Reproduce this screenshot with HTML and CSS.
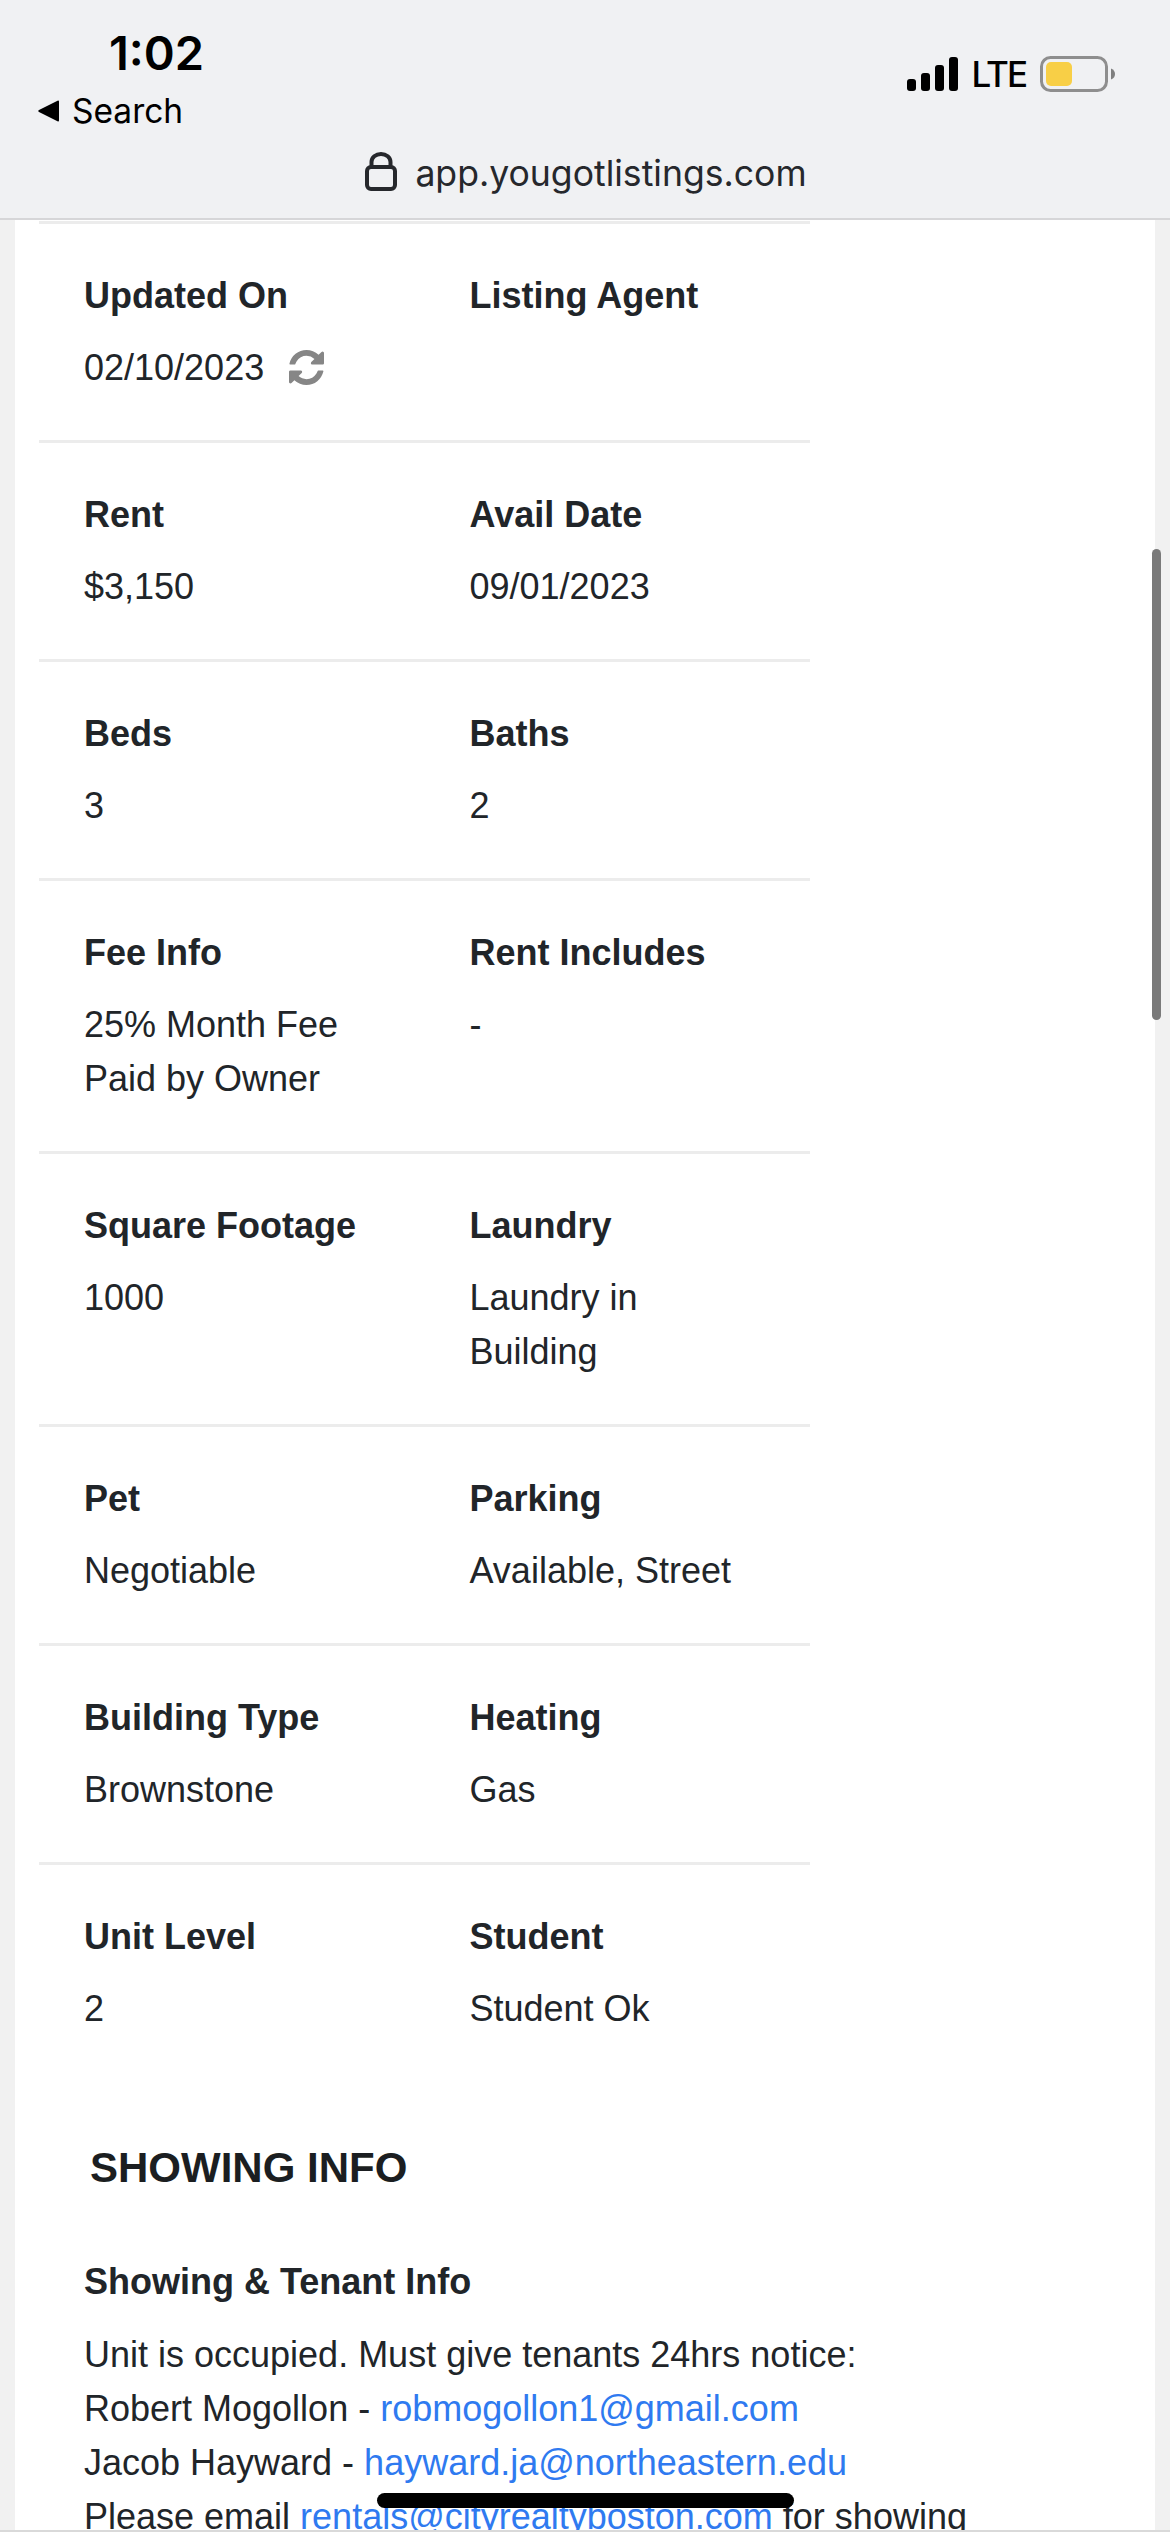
FILE: index.html
```html
<!DOCTYPE html>
<html lang="en">
<head>
  <meta charset="UTF-8">
  <meta name="viewport" content="width=device-width, initial-scale=1.0">
  <title>Listing Details</title>
  <link rel="stylesheet" href="styles.css">
</head>
<body>
  <header class="browser-bar">
    <div class="status-row">
      <div class="status-left">
        <div class="clock">1:02</div>
        <div class="back-link">
          <svg class="back-arrow" viewBox="0 0 22 22"><path d="M21 1.500v19a1 1 0 0 1-1.500.8L1 12a1.200 1.200 0 0 1 0-2L19.500.7A1 1 0 0 1 21 1.500z"/></svg>
          <span>Search</span>
        </div>
      </div>
      <div class="status-right">
        <svg class="signal" viewBox="0 0 51 34">
          <rect x="0" y="22" width="9" height="12" rx="3"/>
          <rect x="14" y="16" width="9" height="18" rx="3"/>
          <rect x="28" y="8" width="9" height="26" rx="3"/>
          <rect x="42" y="0" width="9" height="34" rx="3"/>
        </svg>
        <span class="lte">LTE</span>
        <svg class="battery" viewBox="0 0 75 36">
          <rect x="1.500" y="1.500" width="65" height="33" rx="9" fill="none" stroke="#8e8e8e" stroke-width="3"/>
          <rect x="6" y="6" width="26" height="24" rx="5" fill="#f8cf46"/>
          <path d="M71 12.500c3 1 4 3.500 4 5.500s-1 4.500-4 5.500z" fill="#7f7f7f"/>
        </svg>
      </div>
    </div>
    <div class="url-row">
      <svg class="lock" viewBox="0 0 32 39"><path d="M6.500 15V10a9.500 8 0 0 1 19 0v5" fill="none" stroke="#26282c" stroke-width="4"/><rect x="2" y="15" width="28" height="22" rx="4" fill="none" stroke="#26282c" stroke-width="4"/></svg>
      <span>app.yougotlistings.com</span>
    </div>
  </header>

  <main class="page">
    <section class="details">
      <div class="detail-row">
        <div class="detail-col">
          <h5>Updated On</h5>
          <p>02/10/2023
            <svg class="refresh" viewBox="128 128 1536 1536"><path d="M1639 1056q0 5-1 7-64 268-268 434.500t-478 166.500q-146 0-282.500-55t-243.500-157l-129 129q-19 19-45 19t-45-19-19-45v-448q0-26 19-45t45-19h448q26 0 45 19t19 45-19 45l-137 137q71 66 161 102t187 36q134 0 250-65t186-179q11-17 53-117 8-23 30-23h192q13 0 22.500 9.500t9.500 22.500zm25-800v448q0 26-19 45t-45 19h-448q-26 0-45-19t-19-45 19-45l138-138q-148-137-349-137-134 0-250 65t-186 179q-11 17-53 117-8 23-30 23h-199q-13 0-22.500-9.500t-9.500-22.500v-7q65-268 270-434.500t480-166.500q146 0 284 55.500t245 156.500l130-129q19-19 45-19t45 19 19 45z"/></svg>
          </p>
        </div>
        <div class="detail-col">
          <h5>Listing Agent</h5>
          <p></p>
        </div>
      </div>
      <div class="detail-row">
        <div class="detail-col"><h5>Rent</h5><p>$3,150</p></div>
        <div class="detail-col"><h5>Avail Date</h5><p>09/01/2023</p></div>
      </div>
      <div class="detail-row">
        <div class="detail-col"><h5>Beds</h5><p>3</p></div>
        <div class="detail-col"><h5>Baths</h5><p>2</p></div>
      </div>
      <div class="detail-row">
        <div class="detail-col"><h5>Fee Info</h5><p>25% Month Fee Paid by Owner</p></div>
        <div class="detail-col"><h5>Rent Includes</h5><p>-</p></div>
      </div>
      <div class="detail-row">
        <div class="detail-col"><h5>Square Footage</h5><p>1000</p></div>
        <div class="detail-col"><h5>Laundry</h5><p>Laundry in Building</p></div>
      </div>
      <div class="detail-row">
        <div class="detail-col"><h5>Pet</h5><p>Negotiable</p></div>
        <div class="detail-col"><h5>Parking</h5><p>Available, Street</p></div>
      </div>
      <div class="detail-row">
        <div class="detail-col"><h5>Building Type</h5><p>Brownstone</p></div>
        <div class="detail-col"><h5>Heating</h5><p>Gas</p></div>
      </div>
      <div class="detail-row">
        <div class="detail-col"><h5>Unit Level</h5><p>2</p></div>
        <div class="detail-col"><h5>Student</h5><p>Student Ok</p></div>
      </div>
    </section>

    <section class="showing">
      <h3>SHOWING INFO</h3>
      <h4>Showing &amp; Tenant Info</h4>
      <p>Unit is occupied. Must give tenants 24hrs notice:<br>
        Robert Mogollon - <a href="#">robmogollon1@gmail.com</a><br>
        Jacob Hayward - <a href="#">hayward.ja@northeastern.edu</a><br>
        Please email <a href="#">rentals@cityrealtyboston.com</a> for showing</p>
    </section>
  </main>

  <div class="scroll-thumb"></div>
  <div class="home-bar"></div>
  <div class="bottom-edge"></div>
</body>
</html>
```
FILE: styles.css
```css
html, body {
  height: 2532px;
  overflow: hidden;
}
body {
  position: relative;
  margin: 0;
  background-color: #f1f1f1;
  color: #212529;
  font-family: "Liberation Sans", Arial, sans-serif;
  font-size: 36px;
  line-height: 54px;
}
.browser-bar {
  height: 220px;
  box-sizing: border-box;
  background-color: #f0f1f3;
  border-bottom: 2px solid #d6d6d8;
  font-family: Inter, sans-serif;
}
.status-row {
  display: flex;
  justify-content: space-between;
  height: 149px;
}
.status-left {
  padding: 26px 0 0 38px;
}
.clock {
  padding-left: 71px;
  color: #000;
  font-size: 47px;
  font-weight: 600;
  line-height: 54px;
}
.back-link {
  display: flex;
  align-items: center;
  gap: 12px;
  margin-top: 9px;
  color: #000;
  font-size: 33.500px;
  line-height: 44px;
}
.back-arrow {
  width: 22px;
  height: 22px;
}
.status-right {
  display: flex;
  align-items: center;
  gap: 14px;
  height: 36px;
  margin-top: 56px;
  padding-right: 55px;
}
.signal {
  width: 51px;
  height: 34px;
}
.lte {
  color: #000;
  font-size: 35px;
  font-weight: 500;
  letter-spacing: -2px;
  line-height: 36px;
}
.battery {
  width: 75px;
  height: 36px;
}
.url-row {
  display: flex;
  justify-content: center;
  align-items: center;
  gap: 18px;
  padding-left: 2px;
  color: #26282c;
  font-size: 35.600px;
  line-height: 50px;
}
.lock {
  width: 32px;
  height: 39px;
  margin-top: -6px;
}
.page {
  min-height: 2312px;
  margin: 0 15px;
  padding: 0 0 0 24px;
  background-color: #fff;
}
.details {
  width: 771px;
  padding-top: 1px;
}
.detail-row {
  display: flex;
  padding: 45px 0;
  border-top: 3px solid #ececec;
}
.detail-col {
  width: 50%;
  box-sizing: border-box;
  padding: 0 45px;
}
.detail-col h5 {
  margin: 0 0 18px;
  font-size: 36px;
  font-weight: 700;
  line-height: 54px;
}
.detail-col p {
  min-height: 54px;
  margin: 0;
}
.refresh {
  width: 35px;
  height: 35px;
  margin-left: 15px;
  fill: #868686;
  vertical-align: -5px;
}
.showing {
  padding: 57px 45px 0;
}
.showing h3 {
  margin: 0 0 57px;
  padding: 0 0 0 6px;
  color: #1b1e21;
  font-size: 42px;
  font-weight: 700;
  line-height: 60px;
}
.showing h4 {
  margin: 0 0 19px;
  font-size: 36px;
  font-weight: 700;
  line-height: 54px;
}
.showing p {
  margin: 0;
}
.showing a {
  color: #2f7af0;
  text-decoration: none;
}
.scroll-thumb {
  position: absolute;
  top: 549px;
  left: 1152px;
  width: 9px;
  height: 471px;
  border-radius: 5px;
  background-color: #7a7a7a;
}
.home-bar {
  position: absolute;
  top: 2493px;
  left: 377px;
  width: 417px;
  height: 15px;
  border-radius: 8px;
  background-color: #000;
}
.bottom-edge {
  position: absolute;
  left: 0;
  right: 0;
  bottom: 0;
  height: 2px;
  background-color: #d9d9d9;
}
```
